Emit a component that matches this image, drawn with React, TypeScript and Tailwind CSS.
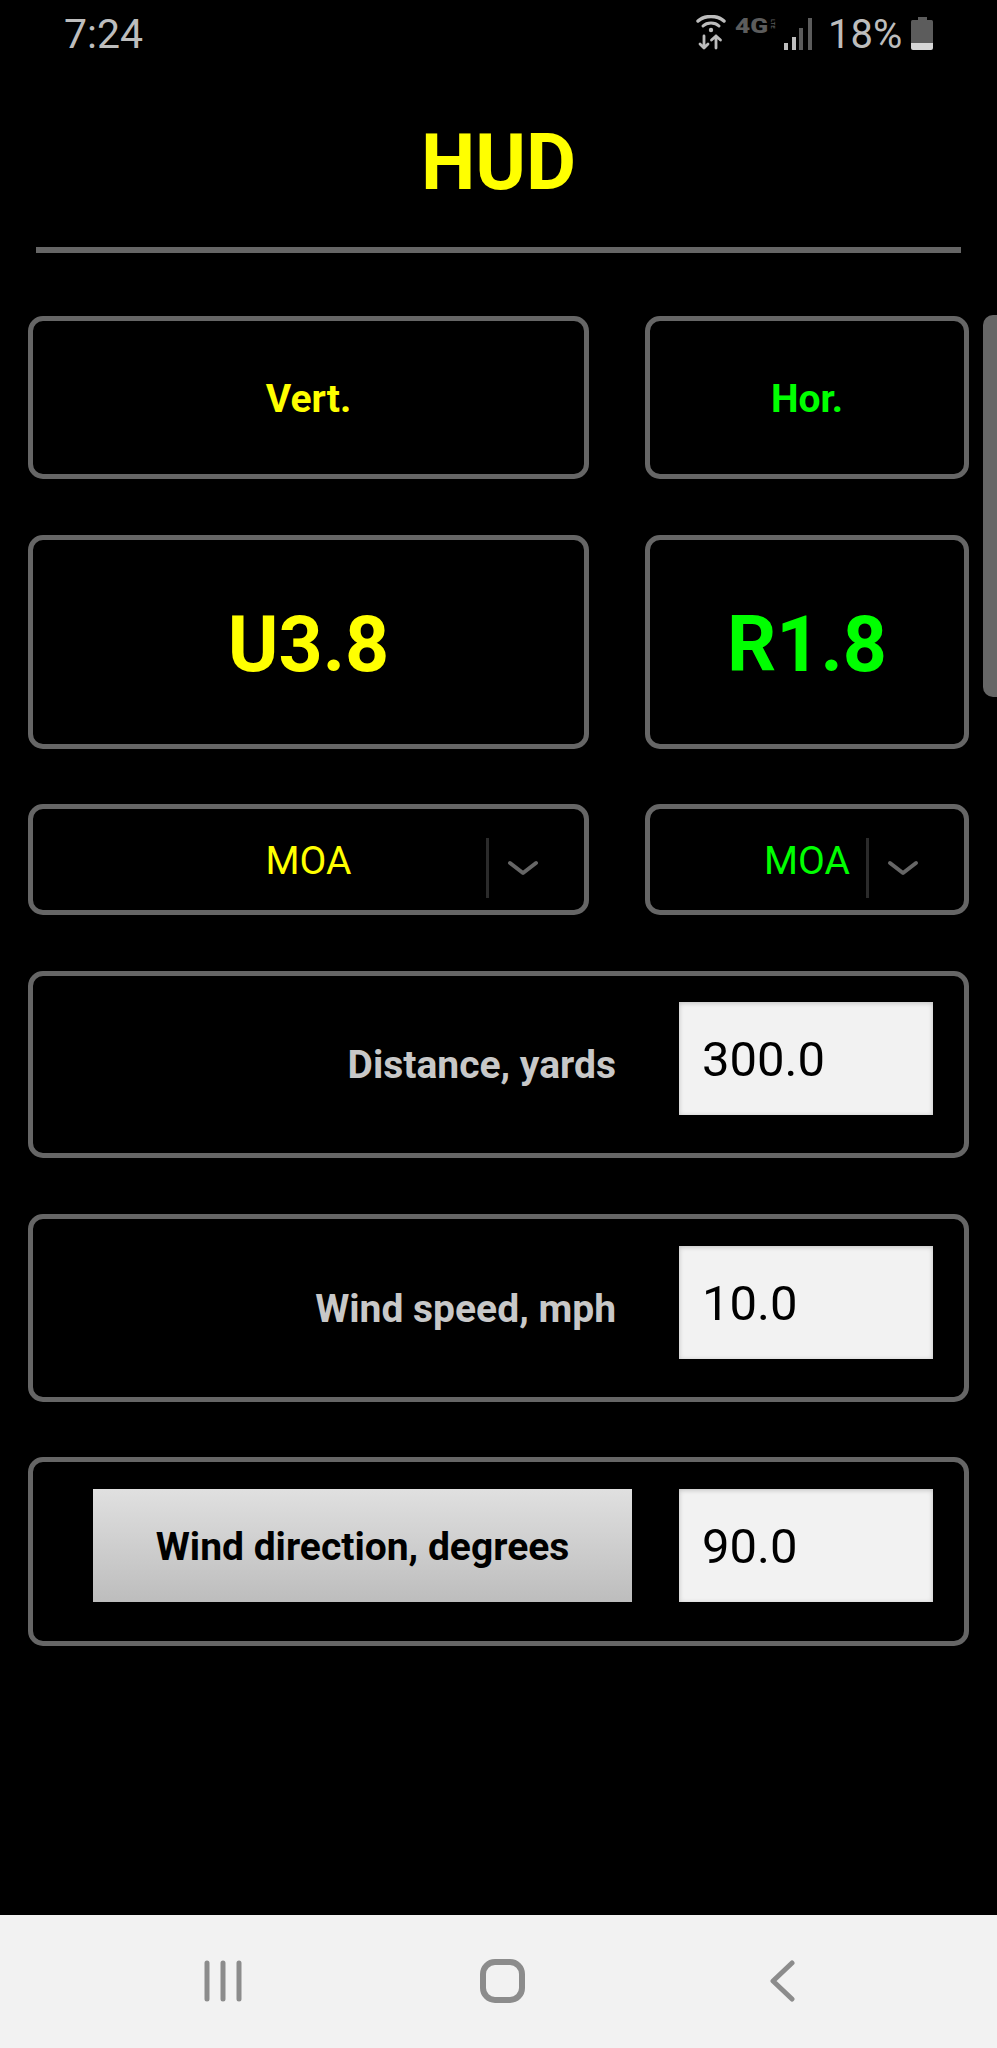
import type { ReactNode } from "react";

const boxClass = "rounded-[15px] border-[5px] border-[#666666] bg-black";

function Chevron() {
  return (
    <svg width="32" height="18" viewBox="0 0 32 18" fill="none" className="text-[#666666]">
      <path d="M3 4 L16 14 L29 4" stroke="currentColor" strokeWidth="4" strokeLinecap="round" strokeLinejoin="round" />
    </svg>
  );
}

function UnitSelect({ color }: { color: string }) {
  return (
    <div className={`${boxClass} grid h-[111px] grid-cols-[1fr_auto_1fr] items-center`}>
      <div />
      <span className={`pt-[3px] text-[39px] leading-none ${color}`}>MOA</span>
      <div className="flex justify-end">
        <div className="mt-[16px] flex h-[60px] w-[98px] items-center">
          <div className="h-full w-[3px] bg-[#2b2b2b]" />
          <div className="ml-[18px]">
            <Chevron />
          </div>
        </div>
      </div>
    </div>
  );
}

function InputRow({ label, value, className }: { label: ReactNode; value: string; className: string }) {
  return (
    <div className={`${boxClass} ${className} flex items-start justify-end gap-[47px] pr-[31px]`}>
      {label}
      <input
        readOnly
        value={value}
        className="h-[113px] w-[254px] bg-[#f2f2f2] pl-[23px] pt-[2px] text-[49px] text-black shadow-[inset_0_1px_5px_rgba(0,0,0,0.22)] outline-none"
      />
    </div>
  );
}

function StatusIcons() {
  return (
    <div className="flex items-start text-[#bdbdbd]">
      {/* wifi with data arrows */}
      <svg width="30" height="35" viewBox="0 0 30 35" fill="none" stroke="currentColor" strokeLinecap="round" strokeLinejoin="round">
        <path d="M2 6 C9 0 21 0 28 6" strokeWidth="3.5" />
        <path d="M7 11 C11 7 19 7 23 11" strokeWidth="3" />
        <circle cx="15" cy="15" r="2.2" fill="currentColor" stroke="none" />
        <path d="M8 21 V33 M4 29 L8 33 L12 29" strokeWidth="2.8" />
        <path d="M20 33 V21 M15.5 25 L20 21 L24.5 25" strokeWidth="2.8" />
      </svg>
      <div className="ml-[9px] mt-[4px] flex h-[15px] w-[42px] items-start text-[#5c5c5c]">
        <span className="w-[35px] origin-left scale-x-125 text-[21px] font-black leading-[15px]">4G</span>
        <span className="text-[6px] font-bold leading-[6px] [writing-mode:vertical-rl]">LTE</span>
      </div>
      <svg width="29" height="32" viewBox="0 0 29 32" className="ml-[6px] mt-[3px]">
        <rect x="1" y="25" width="4" height="7" fill="#bdbdbd" />
        <rect x="9" y="19" width="4" height="13" fill="#bdbdbd" />
        <rect x="16" y="10" width="4" height="22" fill="#5c5c5c" />
        <rect x="25" y="0" width="4" height="32" fill="#5c5c5c" />
      </svg>
      <span className="ml-[16px] w-[74px] whitespace-nowrap text-[40px] leading-none">18%</span>
      {/* battery */}
      <svg width="22" height="33" viewBox="0 0 22 33" className="ml-[9px] mt-[2px]">
        <rect x="7" y="0" width="9" height="4" fill="#5c5c5c" />
        <rect x="0" y="3" width="22" height="24" rx="1.5" fill="#5c5c5c" />
        <path d="M0 26 H22 V31 a2 2 0 0 1 -2 2 H2 a2 2 0 0 1 -2 -2 Z" fill="#d6d6d6" />
      </svg>
    </div>
  );
}

function NavBar() {
  return (
    <div className="mt-auto h-[133px] bg-[#f2f2f2] pl-[203px] pt-[44px] text-[#8c8c8c]">
      <div className="flex h-[44px] items-center">
        <svg width="40" height="42" viewBox="0 0 40 42" fill="none" stroke="currentColor" strokeWidth="5" strokeLinecap="round">
          <path d="M4 3 V39 M20 3 V39 M36 3 V39" />
        </svg>
        <svg width="45" height="44" viewBox="0 0 45 44" fill="none" stroke="currentColor" strokeWidth="6" className="ml-[237px]">
          <rect x="3" y="3" width="39" height="38" rx="12" />
        </svg>
        <svg width="26" height="44" viewBox="0 0 26 44" fill="none" stroke="currentColor" strokeWidth="5" strokeLinecap="round" strokeLinejoin="round" className="ml-[244px]">
          <path d="M23 4 L4 22 L23 40" />
        </svg>
      </div>
    </div>
  );
}

export default function App() {
  return (
    <main className="relative flex h-[2048px] w-[997px] flex-col overflow-hidden bg-black font-['Roboto',sans-serif]">
      <div className="flex h-[68px] items-start justify-between pl-[64px] pr-[64px] pt-[14px]">
        <span className="text-[41px] leading-none text-[#bdbdbd]">7:24</span>
        <div className="mt-[1px]">
          <StatusIcons />
        </div>
      </div>

      <h1 className="mt-[57px] text-center text-[77px] font-bold leading-[77px] text-[#ffff00]">HUD</h1>

      <hr className="mx-[36px] mt-[45px] h-[6px] border-0 bg-[#666666]" />

      <section className="ml-[28px] mr-[28px] mt-[63px] grid grid-cols-[561px_324px] gap-x-[56px]">
        <div className={`${boxClass} flex h-[163px] items-center justify-center pt-[4px] text-[39px] font-bold text-[#ffff00]`}>Vert.</div>
        <div className={`${boxClass} flex h-[163px] items-center justify-center pt-[4px] text-[39px] font-bold text-[#00ff00]`}>Hor.</div>

        <div className={`${boxClass} mt-[56px] flex h-[214px] items-center justify-center pt-[8px] text-[77px] font-bold text-[#ffff00]`}>U3.8</div>
        <div className={`${boxClass} mt-[56px] flex h-[214px] items-center justify-center pt-[8px] text-[77px] font-bold text-[#00ff00]`}>R1.8</div>

        <div className="mt-[55px]">
          <UnitSelect color="text-[#ffff00]" />
        </div>
        <div className="mt-[55px]">
          <UnitSelect color="text-[#00ff00]" />
        </div>
      </section>

      <section className="ml-[28px] mr-[28px] flex flex-col">
        <InputRow
          className="mt-[56px] h-[187px] pt-[26px]"
          value="300.0"
          label={<span className="mr-[16px] mt-[44px] text-[39px] font-bold leading-none text-[#c8c8c8]">Distance, yards</span>}
        />
        <InputRow
          className="mt-[56px] h-[188px] pt-[27px]"
          value="10.0"
          label={<span className="mr-[16px] mt-[44px] text-[39px] font-bold leading-none text-[#c8c8c8]">Wind speed, mph</span>}
        />
        <InputRow
          className="mt-[55px] h-[189px] pt-[27px]"
          value="90.0"
          label={
            <button className="h-[113px] w-[539px] bg-gradient-to-b from-[#e0e0e0] to-[#bdbdbd] pt-[3px] text-[39px] font-bold text-black">
              Wind direction, degrees
            </button>
          }
        />
      </section>

      <NavBar />

      {/* scrollbar thumb sits over the page edge */}
      <div className="absolute right-0 top-[315px] h-[382px] w-[14px] rounded-l-[10px] bg-[#666666]" />
    </main>
  );
}
